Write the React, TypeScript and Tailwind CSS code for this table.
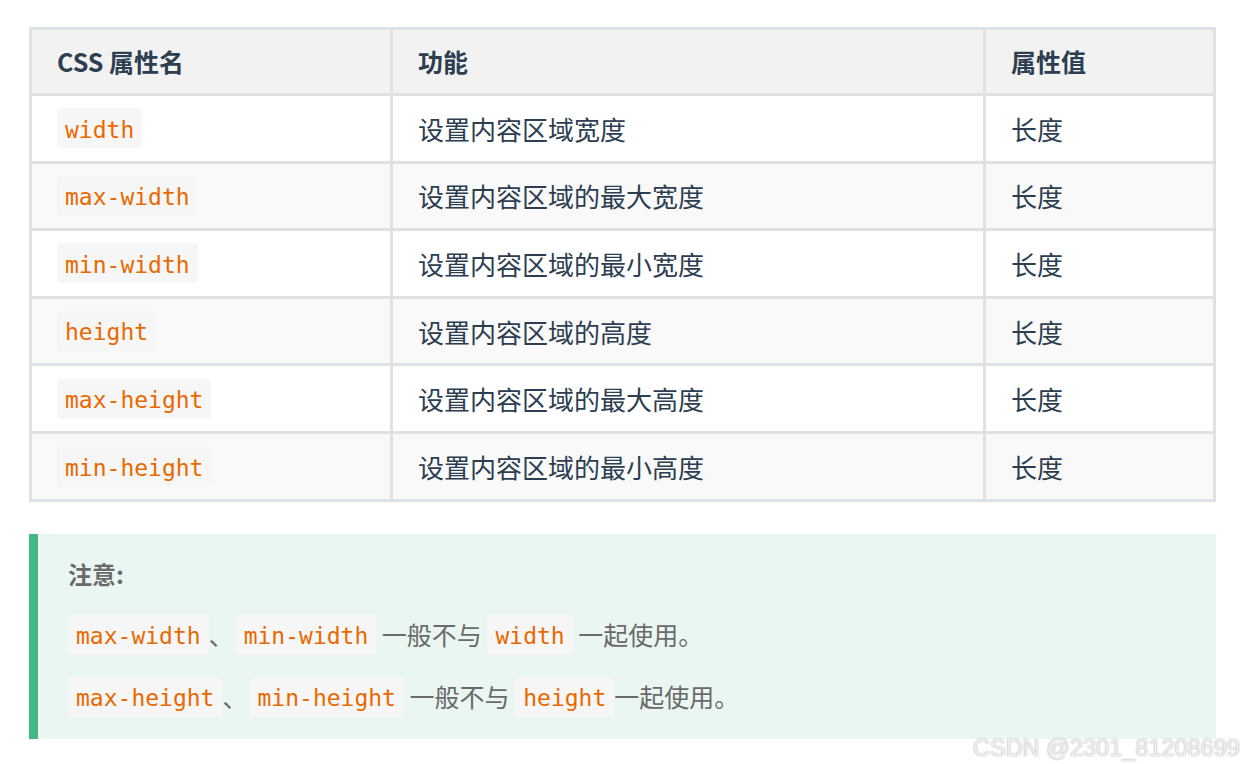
const rows: [string, string][] = [
  ['width', '设置内容区域宽度'],
  ['max-width', '设置内容区域的最大宽度'],
  ['min-width', '设置内容区域的最小宽度'],
  ['height', '设置内容区域的高度'],
  ['max-height', '设置内容区域的最大高度'],
  ['min-height', '设置内容区域的最小高度'],
];

const cjk = { fontFamily: '"Noto Sans CJK SC", "Noto Sans", sans-serif' };

function Code({ children }: { children: string }) {
  return (
    <code
      className="inline-flex items-center rounded-[4px] bg-[#f6f6f6] px-[8px] h-[40px] pt-[3px] text-[23px] text-[#e96900]"
      style={{ fontFamily: '"DejaVu Sans Mono", "Liberation Mono", monospace' }}
    >
      {children}
    </code>
  );
}

export default function App() {
  return (
    <div className="relative w-[1244px] h-[764px] bg-white pl-[29px] pt-[27px]" style={cjk}>
      <table className="w-[1184px] table-fixed border-collapse border-[3px] border-[#dfe2e5] text-[#2c3e50]">
        <colgroup>
          <col className="w-[361px]" />
          <col className="w-[593px]" />
          <col className="w-[230px]" />
        </colgroup>
        <thead>
          <tr className="h-[66px] bg-[#f2f2f2] text-[25px] font-bold">
            <th className="border-[3px] border-[#dfe2e5] pl-[25px] text-left align-middle">CSS 属性名</th>
            <th className="border-[3px] border-[#dfe2e5] pl-[25px] text-left align-middle">功能</th>
            <th className="border-[3px] border-[#dfe2e5] pl-[25px] text-left align-middle">属性值</th>
          </tr>
        </thead>
        <tbody>
          {rows.map(([prop, desc], i) => (
            <tr key={prop} className={i % 2 === 1 ? 'h-[67.6px] bg-[#f9f9f9]' : 'h-[67.6px] bg-white'}>
              <td className="border-[3px] border-[#dfe2e5] pl-[25px] align-middle">
                <Code>{prop}</Code>
              </td>
              <td className="border-[3px] border-[#dfe2e5] pl-[25px] align-middle text-[26px]">{desc}</td>
              <td className="border-[3px] border-[#dfe2e5] pl-[25px] align-middle text-[26px]">长度</td>
            </tr>
          ))}
        </tbody>
      </table>

      <div className="mt-[32px] w-[1187px] h-[205px] border-l-[9px] border-[#42b983] bg-[#eaf6f2] pl-[30px] pt-[24px] text-[#6a6a6a]">
        <div className="h-[32px] leading-[32px] text-[24px] font-bold">注意:</div>
        <div className="mt-[25px] flex items-center h-[40px] text-[25px] whitespace-pre">
          <Code>max-width</Code>
          <span className="mr-[2px]">、</span>
          <Code>min-width</Code>
          <span> 一般不与 </span>
          <Code>width</Code>
          <span> 一起使用。</span>
        </div>
        <div className="mt-[22px] flex items-center h-[40px] text-[25px] whitespace-pre">
          <Code>max-height</Code>
          <span className="mr-[2px]">、</span>
          <Code>min-height</Code>
          <span> 一般不与 </span>
          <Code>height</Code>
          <span>一起使用。</span>
        </div>
      </div>

      <div
        className="absolute left-[973px] top-[731px] text-[23.5px] text-[#efefef] whitespace-nowrap"
        style={{ fontFamily: '"Liberation Sans", Arial, sans-serif', textShadow: '0 0 1.5px #999' }}
      >
        CSDN @2301_81208699
      </div>
    </div>
  );
}
